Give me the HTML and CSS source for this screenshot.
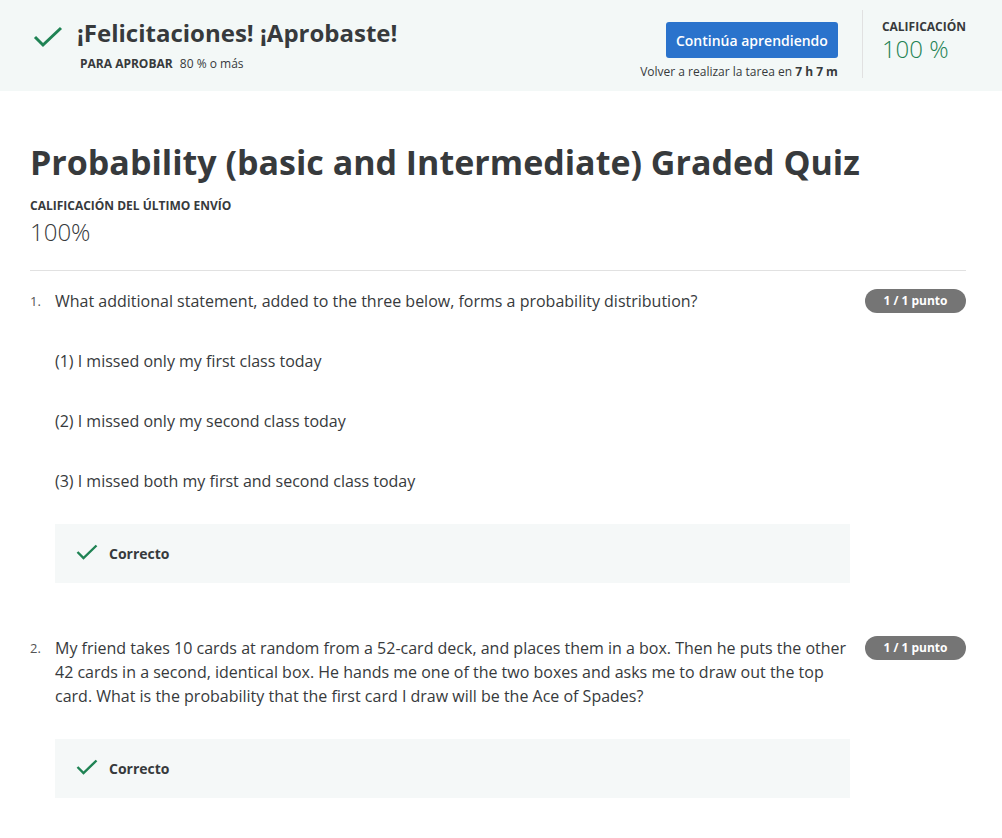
FILE: index.html
```html
<!DOCTYPE html>
<html lang="es">
<head>
<meta charset="utf-8">
<title>Quiz</title>
<link rel="stylesheet" href="styles.css">
</head>
<body>
<header class="banner">
  <div class="banner-left">
    <svg class="banner-check" width="30" height="22" viewBox="0 0 30 22"><polyline points="2,11 10,19 28,2" fill="none" stroke="#1f8354" stroke-width="3"/></svg>
    <div class="banner-text">
      <h2 class="banner-title">¡Felicitaciones! ¡Aprobaste!</h2>
      <div class="banner-sub"><span class="label">PARA APROBAR</span> 80 % o más</div>
    </div>
  </div>
  <div class="banner-actions">
    <button class="btn-primary">Continúa aprendiendo</button>
    <div class="retry">Volver a realizar la tarea en <b>7 h 7 m</b></div>
  </div>
  <div class="banner-grade">
    <div class="label">CALIFICACIÓN</div>
    <div class="grade-value">100 %</div>
  </div>
</header>
<main class="content">
  <h1 class="quiz-title">Probability (basic and Intermediate) Graded Quiz</h1>
  <div class="label last-label">CALIFICACIÓN DEL ÚLTIMO ENVÍO</div>
  <div class="last-value">100%</div>
  <hr class="divider">
  <section class="question">
    <div class="q-num">1.</div>
    <div class="q-body">
      <p class="q-text">What additional statement, added to the three below, forms a probability distribution?</p>
      <p class="q-opt">(1) I missed only my first class today</p>
      <p class="q-opt">(2) I missed only my second class today</p>
      <p class="q-opt">(3) I missed both my first and second class today</p>
      <div class="feedback">
        <svg width="22" height="16" viewBox="0 0 22 16"><polyline points="1.5,8 7.5,14 20.5,1.5" fill="none" stroke="#1f8354" stroke-width="2.4"/></svg>
        <span>Correcto</span>
      </div>
    </div>
    <div class="badge">1 / 1 punto</div>
  </section>
  <section class="question q2">
    <div class="q-num">2.</div>
    <div class="q-body">
      <p class="q-text">My friend takes 10 cards at random from a 52-card deck, and places them in a box. Then he puts the other 42 cards in a second, identical box. He hands me one of the two boxes and asks me to draw out the top card. What is the probability that the first card I draw will be the Ace of Spades?</p>
      <div class="feedback">
        <svg width="22" height="16" viewBox="0 0 22 16"><polyline points="1.5,8 7.5,14 20.5,1.5" fill="none" stroke="#1f8354" stroke-width="2.4"/></svg>
        <span>Correcto</span>
      </div>
    </div>
    <div class="badge">1 / 1 punto</div>
  </section>
</main>
</body>
</html>
```
FILE: styles.css
```css
* { box-sizing: border-box; }
body {
  margin: 0;
  font-family: "Open Sans", "Noto Sans", sans-serif;
  color: #373a3c;
  background: #fff;
}
.label {
  font-size: 12px;
  font-weight: 700;
  color: #373a3c;
}
.banner {
  height: 91px;
  background: #f3f8f7;
  display: flex;
  align-items: flex-start;
  padding: 10px 36px 0 33px;
}
.banner-left {
  flex: 1;
  display: flex;
  align-items: flex-start;
  padding-top: 13px;
}
.banner-check { margin-top: 3px; margin-right: 14px; }
.banner-title {
  margin: 0;
  font-size: 24px;
  font-weight: 700;
  line-height: 20px;
  color: #373a3c;
}
.banner-sub {
  margin-top: 13px;
  margin-left: 3px;
  font-size: 12px;
  line-height: 16px;
}
.banner-sub .label { margin-right: 4px; }
.banner-actions {
  display: flex;
  flex-direction: column;
  align-items: flex-end;
  padding-top: 12px;
  padding-right: 24px;
  border-right: 1px solid #e1e1e1;
  height: 68px;
}
.btn-primary {
  flex-shrink: 0;
  width: 172px;
  height: 36px;
  border: 0;
  border-radius: 3px;
  background: #2a73cc;
  color: #fff;
  font-family: inherit;
  font-size: 14px;
  font-weight: 600;
}
.retry {
  margin-top: 6px;
  font-size: 12px;
  line-height: 16px;
}
.banner-grade {
  padding-left: 19px;
  padding-top: 10px;
}
.banner-grade .label { line-height: 14px; }
.grade-value {
  font-size: 24px;
  font-weight: 300;
  color: #1f8354;
  line-height: 30px;
}
.content {
  padding: 0 36px 0 30px;
}
.quiz-title {
  margin: 48px 0 0;
  font-size: 34px;
  font-weight: 700;
  line-height: 46px;
  color: #373a3c;
}
.last-label { margin-top: 13px; line-height: 16px; }
.last-value {
  margin-top: 2px;
  font-size: 24px;
  font-weight: 300;
  line-height: 32px;
}
.divider {
  margin: 22px 0 0;
  border: 0;
  border-top: 1px solid #e1e1e1;
}
.question {
  display: flex;
  align-items: flex-start;
  margin-top: 18px;
}
.q2 { margin-top: 53px; }
.q-num {
  width: 25px;
  font-size: 13px;
  line-height: 24px;
  color: #545454;
}
.q-body { width: 795px; }
.q-text, .q-opt {
  margin: 0;
  font-size: 16px;
  line-height: 24px;
}
.q-opt { margin-top: 36px; }
.feedback {
  margin-top: 31px;
  height: 59px;
  background: #f5f8f8;
  display: flex;
  align-items: center;
  padding-left: 21px;
  gap: 11px;
  font-size: 14px;
  font-weight: 700;
}
.feedback svg { margin-top: -4px; }
.badge {
  margin-left: 15px;
  width: 101px;
  height: 24px;
  border-radius: 12px;
  background: #757575;
  color: #fff;
  font-size: 12px;
  font-weight: 700;
  line-height: 24px;
  text-align: center;
}
```
